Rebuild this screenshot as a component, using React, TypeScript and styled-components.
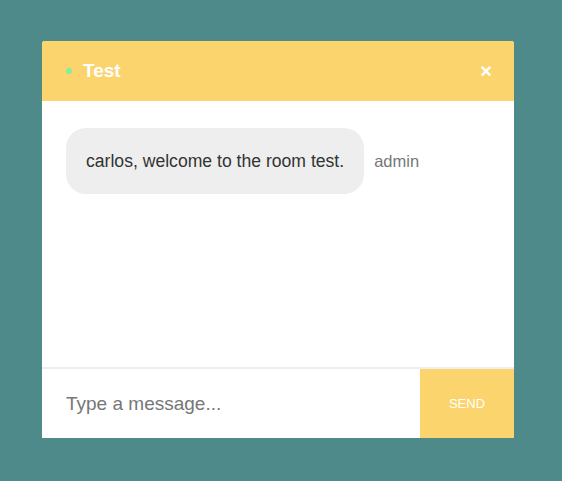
import React from 'react';
import styled, { createGlobalStyle } from 'styled-components';

const GlobalStyle = createGlobalStyle`
  html, body {
    margin: 0;
    padding: 0;
    background: #4f8a8b;
    font-family: "Liberation Sans", Arial, sans-serif;
  }
`;

const Page = styled.div`
  min-height: 100vh;
  box-sizing: border-box;
  padding: 41px 0 0 42px;
`;

const Card = styled.div`
  width: 472px;
  display: flex;
  flex-direction: column;
  background: #fff;
  border-radius: 3px 3px 0 0;
  overflow: hidden;
`;

const Header = styled.div`
  height: 60px;
  background: #fbd46d;
  display: flex;
  align-items: center;
  padding: 0 22px 0 24px;
`;

const Dot = styled.span`
  width: 6px;
  height: 6px;
  border-radius: 50%;
  background: #7ef0a0;
  margin-right: 11px;
`;

const Title = styled.h1`
  margin: 0;
  flex: 1;
  font-size: 19px;
  font-weight: bold;
  color: #fff;
`;

const Close = styled.button`
  border: 0;
  background: none;
  padding: 0;
  color: #fff;
  font-size: 20px;
  font-weight: bold;
  line-height: 1;
  font-family: inherit;
  cursor: pointer;
`;

const Messages = styled.div`
  height: 268px;
  padding: 27px 24px;
  box-sizing: border-box;
  border-bottom: 2px solid #eeeeee;
`;

const Row = styled.div`
  display: flex;
  align-items: center;
  gap: 10px;
`;

const Bubble = styled.div`
  background: #eeeeee;
  border-radius: 20px;
  padding: 0 20px;
  height: 66px;
  display: flex;
  align-items: center;
  font-size: 17.6px;
  color: #333;
`;

const Author = styled.span`
  font-size: 16.5px;
  color: #777;
`;

const Footer = styled.form`
  display: flex;
  height: 69px;
`;

const Input = styled.input`
  flex: 1;
  border: 0;
  outline: none;
  padding: 0 24px;
  font-family: inherit;
  font-size: 19px;
  color: #333;
  &::placeholder {
    color: #777;
  }
`;

const Send = styled.button`
  width: 94px;
  border: 0;
  background: #fbd46d;
  color: #fff;
  font-family: inherit;
  font-size: 13px;
  cursor: pointer;
`;

export default function App() {
  return (
    <Page>
      <GlobalStyle />
      <Card>
        <Header>
          <Dot />
          <Title>Test</Title>
          <Close>×</Close>
        </Header>
        <Messages>
          <Row>
            <Bubble>carlos, welcome to the room test.</Bubble>
            <Author>admin</Author>
          </Row>
        </Messages>
        <Footer onSubmit={(e) => e.preventDefault()}>
          <Input placeholder="Type a message..." />
          <Send type="submit">SEND</Send>
        </Footer>
      </Card>
    </Page>
  );
}
